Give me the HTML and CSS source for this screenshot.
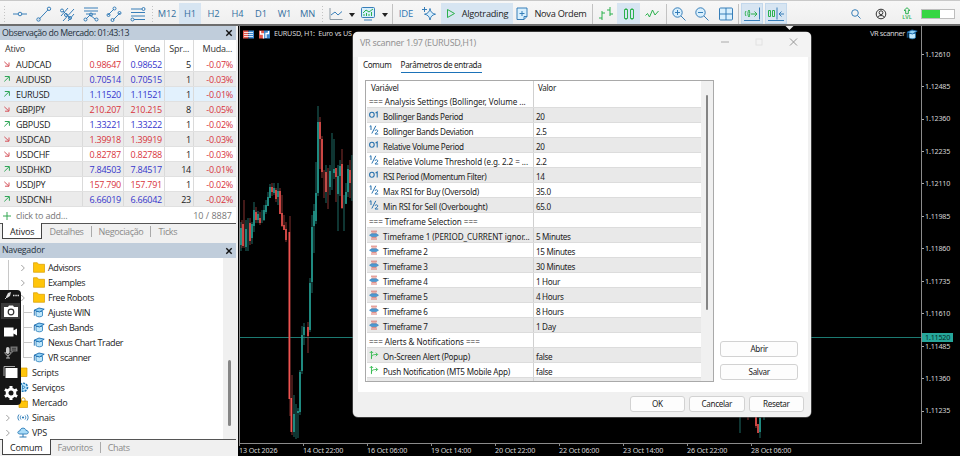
FILE: index.html
```html
<!DOCTYPE html>
<html lang="pt">
<head>
<meta charset="utf-8">
<title>EURUSD,H1</title>
<link rel="stylesheet" href="styles.css">
</head>
<body>
<svg class="defs" aria-hidden="true">
  <defs>
    <symbol id="down" viewBox="0 0 8 8"><path d="M1.300 1.800 5.800 6M6 2.500V6.200H2" fill="none" stroke="#d5525a" stroke-width="1"/></symbol>
    <symbol id="up" viewBox="0 0 8 8"><path d="M1.300 6.400 6 1.800M1.800 1.500h4.600v4.300" fill="none" stroke="#2fa557" stroke-width="1"/></symbol>
    <symbol id="chev" viewBox="0 0 6 8"><path d="M1.300 1 4.300 4 1.300 7" fill="none" stroke="#8c8c8c" stroke-width=".8"/></symbol>
    <symbol id="folder" viewBox="0 0 12 11"><path d="M.5.7h3.800l1.200 1.600h6v8H.5z" fill="#ffc50a" stroke="#d99c00" stroke-width=".7"/></symbol>
    <symbol id="cap" viewBox="0 0 12 11"><path d="M3 4.500v4.200c1.700 1.500 5 1.500 6.500 0V4.500z" fill="#bfe6fb" stroke="#1f78b8" stroke-width=".8"/><path d="M1 3.300 6 1l5.200 1.200L6.500 5z" fill="#8fd0f5" stroke="#1668ab" stroke-width=".9"/><path d="M1.300 3.500v5.200" stroke="#1668ab" stroke-width=".9"/></symbol>
    <symbol id="enum" viewBox="0 0 10 10"><path d="M2 1.200h6M2.500 3h5M2.500 7.300h5M2 9h6" stroke="#d6675f" stroke-width=".9"/><path d="M.5 5.200 2.500 3.800h5l2 1.400-2 1.300h-5z" fill="#4d9ad2" stroke="#2375b3" stroke-width=".5"/></symbol>
    <symbol id="bool" viewBox="0 0 11 10"><path d="M2.700 9.500V1M.8 2.800 2.700.9l1.900 1.900M2.700 8c0-3 2-3.600 6.500-3.600M7.500 2.400l2 2-2 2" fill="none" stroke="#2fb84c" stroke-width="1"/></symbol>
    <symbol id="half" viewBox="0 0 10 10"><path d="M.6 1.700 2 .7v4.300M6.800.8 2.800 8.500M6 5.800c.3-1.400 3-1.300 2.700.4C8.500 7.300 6.300 8 6 9h3.200" fill="none" stroke="#2771ad" stroke-width="1"/></symbol>
    <symbol id="int" viewBox="0 0 10 10"><path d="M6.600 3 8.200 2v5.500" fill="none" stroke="#2771ad" stroke-width="1.100"/><ellipse cx="2.900" cy="4.800" rx="2.300" ry="2.500" fill="none" stroke="#2771ad" stroke-width="1.100"/></symbol>
  </defs>
</svg>
<div class="app">
  <header class="toolbar">
    <i class="grip"></i>
    <svg width="16" height="16"><path d="M1 8h5M10 8h5" class="b"/><circle cx="8" cy="8" r="1.800" class="b"/></svg>
    <svg width="16" height="16"><path d="m3 13.300 9-9.500" class="b"/><circle cx="2.500" cy="13.500" r="1.700" class="b"/><circle cx="13" cy="2.800" r="1.700" class="b"/></svg>
    <svg width="16" height="16"><path d="m2 10 7-8M4 15l11-12M9 15l6-7M4 5l7 7" class="b"/><circle cx="3" cy="4.500" r="1.500" class="b"/><circle cx="7" cy="9" r="1.500" class="b"/><circle cx="11" cy="12" r="1.500" class="b"/></svg>
    <svg width="16" height="16"><path d="M1 2h14M1 5h14M3 8h10M3 13l4-4 5 4" class="b"/><circle cx="2.500" cy="13.500" r="1.500" class="b"/><circle cx="8" cy="8.500" r="1.500" class="b"/><circle cx="13.500" cy="13.500" r="1.500" class="b"/></svg>
    <svg width="16" height="16"><path d="m2 9 6-6M7 14l7-7" class="b"/><circle cx="2.500" cy="9" r="1.500" class="b"/><circle cx="8.500" cy="2.500" r="1.500" class="b"/><circle cx="6.500" cy="14" r="1.500" class="b"/><circle cx="13.500" cy="7" r="1.500" class="b"/></svg>
    <svg width="16" height="16"><path d="M1 3h11M1 6.500h14M1 10h14M4 13.500h11" class="b"/><circle cx="13.500" cy="3" r="1.500" class="b"/><circle cx="2.500" cy="13.500" r="1.500" class="b"/></svg>
    <i class="grip"></i>
    <span class="tf">M12</span><span class="tf on">H1</span><span class="tf">H2</span><span class="tf">H4</span><span class="tf">D1</span><span class="tf">W1</span><span class="tf">MN</span>
    <i class="grip"></i>
    <svg width="16" height="16"><path d="M2 2v11.500h12.500" class="g"/><path d="m3 9 4-3 3 3 4-3.500" class="b"/></svg>
    <i class="caret"></i>
    <svg width="16" height="16"><rect x="1.500" y="1.500" width="13" height="10" rx="1" class="b lb"/><path d="m3 7 3-3 3 2 4-3" class="n"/><path d="M4 10V8M6.500 10V7M9 10V8M11.500 10V6" class="n"/><path d="M4 14h8" class="b"/></svg>
    <i class="caret"></i>
    <i class="sep"></i>
    <span class="ide">IDE</span>
    <svg width="16" height="16"><path d="M9 2.500c.6 3.500 2 5 5.500 5.700C11 9 9.600 10.500 9 14c-.6-3.500-2-5-5.500-5.800C7 7.500 8.400 6 9 2.500z" class="b lb"/><path d="M3.500 1v5M1 3.500h5" class="b"/></svg>
    <span class="tool on"><svg width="10" height="12"><path d="M1.500 1.500v8l7-4z" class="n"/></svg>Algotrading</span>
    <span class="tool new"><svg width="12" height="14"><path d="M1 1h10v8.500l-3 3H1zM8 12.500v-3h3" class="b lb"/><path d="M6 4v5M3.500 6.500h5" class="b"/></svg>Nova Ordem</span>
    <i class="sep"></i>
    <svg width="16" height="16"><path d="M4 5v9M1 12h3M4 7h3M12 1v9M9 4h3M12 8h3" class="n"/></svg>
    <span class="on"><svg width="16" height="16"><path d="M3.500 3.500h3v9h-3zM9.500 3.500h3v9h-3zM5 2v1M5 13v1M11 2v1M11 13v1" class="n"/></svg></span>
    <svg width="16" height="16"><path d="m1.500 9.500 2-2 2 3.500 3-7 2.500 5 3.500-4" class="n"/></svg>
    <i class="sep"></i>
    <svg width="16" height="16"><circle cx="6.500" cy="6.500" r="4.700" class="b lb"/><path d="m10 10 4.500 4.500M4 6.500h5M6.500 4v5" class="b"/></svg>
    <svg width="16" height="16"><circle cx="6.500" cy="6.500" r="4.700" class="b lb"/><path d="m10 10 4.500 4.500M4 6.500h5" class="b"/></svg>
    <svg width="16" height="16"><rect x="1.500" y="2" width="13" height="12" rx="1" class="b lb"/><path d="M8 2v12M1.500 8h13" class="b"/></svg>
    <i class="sep"></i>
    <span class="on box"><svg width="18" height="18"><path d="M3 6c-1 1.500-1 3.500 0 5M6 5c-1.500 2-1.500 5 0 7 1-2 1-5 0-7M8 9h6M11.500 6.500 14 9l-2.500 2.500" class="n"/><path d="M16.500 2.500v12M1 15.500h16" class="b"/></svg></span>
    <span class="on box"><svg width="18" height="18"><path d="M1.500 5.500h2v6h-2zM5.500 5.500h2v6h-2z" class="n"/><path d="M10 2.500v12M1 15.500h16M17 9h-4.500M14.500 6.500 12 9l2.500 2.500" class="b"/></svg></span>
    <i></i>
    <svg width="12" height="12"><circle cx="5" cy="5" r="3.300" class="b"/><path d="m7.500 7.500 3 3" class="b"/></svg>
    <svg width="14" height="14"><circle cx="7" cy="7" r="4.800" class="k"/><circle cx="7" cy="5.700" r="1.900" class="k"/><path d="M3.500 10.500c1-2.600 6-2.600 7 0" class="k"/></svg>
    <span class="lvl"><svg width="10" height="8"><path d="M5 .7 8 3.500H6.300v3.200H3.700V3.500H2z" class="n"/></svg>LVL</span>
    <span class="batt"><i></i></span>
  </header>
  <main class="main">
    <aside class="side">
      <section class="panel watch">
        <h2 class="cap">Observação do Mercado: 01:43:13<svg width="8" height="8"><path d="m1.300 1.300 5.400 5.400M6.700 1.300 1.300 6.700" stroke="#111" stroke-width="1.400"/></svg></h2>
        <div class="q head"><span>Ativo</span><span>Bid</span><span>Venda</span><span>Spr...</span><span>Muda...</span></div>
        <div class="q r"><span><svg><use href="#down"/></svg>AUDCAD</span><span>0.98647</span><span class="bl">0.98652</span><span>5</span><span>-0.07%</span></div>
        <div class="q bb alt"><span><svg><use href="#up"/></svg>AUDUSD</span><span>0.70514</span><span>0.70515</span><span>1</span><span>-0.03%</span></div>
        <div class="q bb sel"><span><svg><use href="#up"/></svg>EURUSD</span><span>1.11520</span><span>1.11521</span><span>1</span><span>-0.01%</span></div>
        <div class="q r alt"><span><svg><use href="#down"/></svg>GBPJPY</span><span>210.207</span><span>210.215</span><span>8</span><span>-0.05%</span></div>
        <div class="q bb"><span><svg><use href="#up"/></svg>GBPUSD</span><span>1.33221</span><span>1.33222</span><span>1</span><span>-0.02%</span></div>
        <div class="q r alt"><span><svg><use href="#down"/></svg>USDCAD</span><span>1.39918</span><span>1.39919</span><span>1</span><span>-0.03%</span></div>
        <div class="q r"><span><svg><use href="#down"/></svg>USDCHF</span><span>0.82787</span><span>0.82788</span><span>1</span><span>-0.03%</span></div>
        <div class="q bb alt"><span><svg><use href="#up"/></svg>USDHKD</span><span>7.84503</span><span>7.84517</span><span>14</span><span>-0.01%</span></div>
        <div class="q r"><span><svg><use href="#down"/></svg>USDJPY</span><span>157.790</span><span>157.791</span><span>1</span><span>-0.02%</span></div>
        <div class="q bb alt"><span><svg><use href="#up"/></svg>USDCNH</span><span>6.66019</span><span>6.66042</span><span>23</span><span>-0.02%</span></div>
        <div class="add"><svg width="10" height="10"><path d="M5 1v8M1 5h8" stroke="#35a853"/></svg><span>click to add...</span><span class="count">10 / 8887</span></div>
        <nav class="tabs"><b>Ativos</b><span>Detalhes</span><span>Negociação</span><span>Ticks</span></nav>
      </section>
      <section class="panel nav">
        <h2 class="cap">Navegador<svg width="8" height="8"><path d="m1.300 1.300 5.400 5.400M6.700 1.300 1.300 6.700" stroke="#111" stroke-width="1.400"/></svg></h2>
        <div class="treewrap">
          <ul class="tree">
            <li class="l2"><svg class="chev"><use href="#chev"/></svg><svg class="ic"><use href="#folder"/></svg>Advisors</li>
            <li class="l2"><svg class="chev"><use href="#chev"/></svg><svg class="ic"><use href="#folder"/></svg>Examples</li>
            <li class="l2"><svg class="chev"><use href="#chev"/></svg><svg class="ic"><use href="#folder"/></svg>Free Robots</li>
            <li class="l2 leaf"><svg class="ic"><use href="#cap"/></svg>Ajuste WIN</li>
            <li class="l2 leaf"><svg class="ic"><use href="#cap"/></svg>Cash Bands</li>
            <li class="l2 leaf"><svg class="ic"><use href="#cap"/></svg>Nexus Chart Trader</li>
            <li class="l2 leaf last"><svg class="ic"><use href="#cap"/></svg>VR scanner</li>
            <li class="l1"><svg class="ic" viewBox="0 0 12 11"><path d="M2 1h8v8.500H2z" fill="#ffc50a" stroke="#d99c00" stroke-width=".7"/></svg>Scripts</li>
            <li class="l1"><svg class="ic" viewBox="0 0 12 11"><circle cx="6.500" cy="5.300" r="4" fill="#bfe6fb" stroke="#1f78b8" stroke-width="1.600" stroke-dasharray="2 1"/><path d="M5.500 3.500v3.800l2.700-2z" fill="none" stroke="#1f78b8" stroke-width=".8"/></svg>Serviços</li>
            <li class="l1"><svg class="ic" viewBox="0 0 12 11"><path d="M2 4h8.500v6.500H2z" fill="#ffc50a" stroke="#d99c00" stroke-width=".7"/><path d="M4.500 5V2.500C4.500.3 8 .3 8 2.500V5" fill="none" stroke="#d99c00"/></svg>Mercado</li>
            <li class="l1"><svg class="chev"><use href="#chev"/></svg><svg class="ic" viewBox="0 0 12 11"><path d="M2 2.500c-1.500 2-1.500 4 0 6M4 3.500c-1 1.300-1 2.700 0 4M10 2.500c1.500 2 1.500 4 0 6M8 3.500c1 1.300 1 2.700 0 4" fill="none" stroke="#2a79b5" stroke-width=".9"/><circle cx="6" cy="5.500" r="1.100" fill="#2a79b5"/></svg>Sinais</li>
            <li class="l1"><svg class="chev"><use href="#chev"/></svg><svg class="ic" viewBox="0 0 12 11"><path d="M3 7C-.2 7 .5 3.800 2.800 4 3.500.2 8.500.3 9 3.500c3-.2 3 3.500.5 3.500z" fill="#a9dcf9" stroke="#2a79b5" stroke-width=".9"/><path d="M6 7v3M2.500 10h7" stroke="#2a79b5"/></svg>VPS</li>
          </ul>
          <div class="gutter"><i></i></div>
        </div>
        <nav class="tabs"><b>Comum</b><span>Favoritos</span><span>Chats</span></nav>
      </section>
    </aside>
    <section class="chart">
      <div class="plot">
        <div class="ctitle"><span><svg width="12" height="9"><path d="M0 .5h5.500v8H0z" fill="#e4574c"/><path d="M5.500.5H11v8H5.500z" fill="#3c87cf"/><path d="M1 2.500h9M1 4.500h9M1 6.500h9" stroke="#fff" stroke-width=".8"/></svg><svg class="s2" width="12" height="9"><path d="M0 .5h5v8H0z" fill="#e4574c"/><path d="M5 .5h6v8H5z" fill="#3c87cf"/><path d="M1.500 1v3h3v4.500M7 8V3.500h2.500V1" stroke="#fff" stroke-width="1.300" fill="none"/></svg>EURUSD, H1:&nbsp; Euro vs US</span><span class="ea">VR scanner<svg width="12" height="11"><use href="#cap"/></svg></span></div>
        <svg class="candles" width="681" height="417" viewBox="240 26 681 417">
          <path d="M785.500 26h8l-4 4z" fill="#e8e8e8"/>
          <path d="M239 337.500h682" stroke="#1c7a72"/>
          <g stroke="#26867e" stroke-width=".8"><path d="M241 222v29M246 220v31M248 218v33M252 222v22M254 202v30M258 211v12M262 210v13M264 205v16M266 200v14M268 192v14M270 184v14M274 183v12M278 183v22M294 395v42M296 404v35M298 408v30M300 370v45M302 326v48M304 323v22M310 278v54M312 215v78M314 204v49M316 162v62M318 106v90M326 165v38M330 165v30M332 133v57M334 139v40M338 165v66M340 160v36M344 195v36M346 183v20M348 165v32M352 155v46M354 145v41M740 410v23M760 410v28M764 410v10"/></g>
          <g stroke="#a83f3c" stroke-width=".8"><path d="M242 220v28M244 200v48M250 218v27M256 207v16M260 212v13M272 183v13M276 188v14M280 188v26M282 195v32M284 215v15M286 222v20M290 216v200M292 375v60M308 322v31M320 117v52M322 136v42M324 170v28M328 168v41M336 172v30M342 149v60M350 160v38M748 410v10M756 410v18"/></g>
          <g stroke="#26a69a" stroke-width="1.500"><path d="M241 228v17M246 229v18M252 224v14M254 210v16M258 214v6M264 210v10M266 205v7M268 197v9M270 187v11M274 188v5M278 191v6M294 414v18M298 411v2M300 372v40M302 335v36M304 327v8M310 283v47M312 227v55M314 211v15M316 193v28M318 122v71M330 171v16M334 169v4M338 176v18M340 166v10M346 192v12M348 169v23M354 155v25M760 418v14"/></g>
          <g stroke="#ef5350" stroke-width="1.600"><path d="M243 224v22M250 223v18M256 212v8M260 218v5M272 187v5M276 190v9M280 191v23M282 213v13M284 225v5M286 229v11M289.300 232v167M291.300 398v34M308 327v9M320 122v17M322 139v33M326 172v20M336 168v9M342 164v44M350 170v13M756 415v11M758 424v9"/></g>
        </svg>
      </div>
      <div class="prices"><span>1.12610</span><span>1.12485</span><span>1.12360</span><span>1.12235</span><span>1.12110</span><span>1.11985</span><span>1.11860</span><span>1.11735</span><span>1.11610</span><span>1.11485</span><span>1.11360</span><span>1.11235</span><b>1.11520</b></div>
      <div class="dates"><span>13 Oct 2026</span><span>14 Oct 22:00</span><span>16 Oct 06:00</span><span>19 Oct 14:00</span><span>20 Oct 22:00</span><span>22 Oct 06:00</span><span>23 Oct 14:00</span><span>26 Oct 22:00</span><span>28 Oct 06:00</span></div>
    </section>
  </main>

  <div class="dialog">
    <div class="dtitle"><span>VR scanner 1.97 (EURUSD,H1)</span><svg width="80" height="10"><path d="M1 5h8" stroke="#aaa"/><rect x="36" y="2" width="6" height="6" fill="none" stroke="#e2e2e2"/><path d="m70 1.500 7 7M77 1.500l-7 7" stroke="#8c8c8c" stroke-width=".9"/></svg></div>
    <div class="dbody">
      <nav class="dtabs"><span>Comum</span><b>Parâmetros de entrada</b></nav>
      <div class="dcols">
        <div class="grid">
          <div class="rows">
            <div class="p ph"><span>Variável</span><span>Valor</span></div>
            <div class="p s"><span>=== Analysis Settings (Bollinger, Volume ...</span><span></span></div>
            <div class="p"><span><svg><use href="#int"/></svg>Bollinger Bands Period</span><span>20</span></div>
            <div class="p"><span><svg><use href="#half"/></svg>Bollinger Bands Deviation</span><span>2.5</span></div>
            <div class="p"><span><svg><use href="#int"/></svg>Relative Volume Period</span><span>20</span></div>
            <div class="p w"><span><svg><use href="#half"/></svg>Relative Volume Threshold (e.g. 2.2 = ...</span><span>2.2</span></div>
            <div class="p"><span><svg><use href="#int"/></svg>RSI Period (Momentum Filter)</span><span>14</span></div>
            <div class="p m"><span><svg><use href="#half"/></svg>Max RSI for Buy (Oversold)</span><span>35.0</span></div>
            <div class="p m"><span><svg><use href="#half"/></svg>Min RSI for Sell (Overbought)</span><span>65.0</span></div>
            <div class="p s"><span>=== Timeframe Selection ===</span><span></span></div>
            <div class="p w"><span><svg><use href="#enum"/></svg>Timeframe 1 (PERIOD_CURRENT ignor...</span><span>5 Minutes</span></div>
            <div class="p"><span><svg><use href="#enum"/></svg>Timeframe 2</span><span>15 Minutes</span></div>
            <div class="p"><span><svg><use href="#enum"/></svg>Timeframe 3</span><span>30 Minutes</span></div>
            <div class="p"><span><svg><use href="#enum"/></svg>Timeframe 4</span><span>1 Hour</span></div>
            <div class="p"><span><svg><use href="#enum"/></svg>Timeframe 5</span><span>4 Hours</span></div>
            <div class="p"><span><svg><use href="#enum"/></svg>Timeframe 6</span><span>8 Hours</span></div>
            <div class="p"><span><svg><use href="#enum"/></svg>Timeframe 7</span><span>1 Day</span></div>
            <div class="p s"><span>=== Alerts &amp; Notifications ===</span><span></span></div>
            <div class="p m"><span><svg><use href="#bool"/></svg>On-Screen Alert (Popup)</span><span>false</span></div>
            <div class="p m"><span><svg><use href="#bool"/></svg>Push Notification (MT5 Mobile App)</span><span>false</span></div>
            <div class="p"><span></span><span></span></div>
          </div>
          <div class="dgutter"><i></i></div>
        </div>
        <div class="actions"><button>Abrir</button><button>Salvar</button></div>
      </div>
    </div>
    <div class="dfoot"><button>OK</button><button>Cancelar</button><button>Resetar</button></div>
  </div>

  <div class="rec">
    <svg width="16" height="10"><path d="m3 6 2-4 3-1-1 4-3 2z" fill="#ddd"/><path d="m2 8 3-3" stroke="#ddd"/><path d="M10 4.500h1.500M12.300 4.500h1.500M14.500 4.500H16" stroke="#ddd" stroke-width="1.300"/></svg>
    <div class="cam"><svg width="16" height="14"><path d="M1 3h4l1-1.500h4L11 3h4v10H1z" fill="#fff"/><circle cx="8" cy="8" r="2.800" fill="none" stroke="#333" stroke-width="1.200"/></svg></div>
    <svg width="16" height="14"><path d="M1 2.500h9.500v3l3.500-2v7l-3.500-2v3H1z" fill="#fff"/></svg>
    <svg width="16" height="14"><rect x="3" y="2" width="3.500" height="7" rx="1.700" fill="#ccc"/><path d="M2 7c0 4.500 6 4.500 6 0M5 10.500V13M3 13h4" stroke="#bbb" fill="none"/><path d="M7.500 1.500h7v5h-4l-2 2v-2h-1z" fill="#777"/><path d="M9 3.300h4M9 5h4" stroke="#222" stroke-width=".7"/></svg>
    <svg width="16" height="14"><path d="M1 11V1.500h11" stroke="#aaa" fill="none"/><path d="M2.500 3h12v10h-12z" fill="#fff"/></svg>
    <svg width="16" height="16"><circle cx="8" cy="8" r="3.900" fill="none" stroke="#fff" stroke-width="2.800"/><path d="M8 1v2.500M8 12.500V15M1.900 4.500l2.200 1.200M11.900 10.300l2.200 1.200M1.900 11.500l2.200-1.200M11.900 5.700l2.200-1.200" stroke="#fff" stroke-width="3"/></svg>
  </div>
</div>
</body>
</html>
```
FILE: styles.css
```css
* { box-sizing: border-box; }
body { margin: 0; overflow: hidden; font: 9px/1 "Open Sans", "Noto Sans", sans-serif; color: #222; letter-spacing: -.2px; }
i { font-style: normal; }
svg { display: block; flex: none; }
.defs { position: absolute; width: 0; height: 0; }
.app { position: relative; width: 960px; height: 456px; display: flex; flex-direction: column; background: #f0f0f0; overflow: hidden; }

.b { fill: none; stroke: #2e78b5; stroke-width: .95; }
.lb { fill: #d8effd; }
.n { fill: none; stroke: #2bb14c; stroke-width: 1; }
.g { fill: none; stroke: #8a98a3; stroke-width: 1; }
.k { fill: none; stroke: #333; stroke-width: 1; }

.toolbar {
  flex: none; height: 26px; display: grid; align-items: center; justify-items: center;
  grid-template-columns: 8px 24px 23px 24px 23px 24px 23px 6px 24px 22px 25px 23px 24px 23px 23px 6px 22px 9px 24px 9px 7px 20px 25px 72px 77px 5px 22px 23px 24px 4px 22px 24px 23px 3px 24px 24px 1fr 24px 26px 26px 35px 5px;
  grid-template-rows: 21px; padding: 2px 0 0; border-top: 1px solid #c9c9c9; border-bottom: 2px solid #6d6d6d;
  background: linear-gradient(#f7f7f7, #efefef);
}
.grip { width: 3px; height: 18px; background: radial-gradient(circle, #c4c4c4 .6px, transparent .9px) 0 0 / 3px 3px; }
.sep { width: 1px; height: 20px; background: #c2c2c2; }
.caret { border: 3px solid transparent; border-top: 4px solid #222; border-bottom: 0; margin-top: 3px; }
.toolbar .on { background: #d7e5f2; height: 21px; width: 100%; display: flex; align-items: center; justify-content: center; }
.toolbar .box { width: 22px; border: 1px solid #c3d8ec; }
.tf { color: #336f9f; font-size: 9.300px; letter-spacing: -.1px; }
.ide { color: #2e78b5; font-size: 9.500px; letter-spacing: -.1px; }
.tool { display: flex; align-items: center; gap: 6px; font-size: 9.200px; letter-spacing: -.250px; white-space: nowrap; padding-top: 1px; }
.lvl { display: flex; flex-direction: column; align-items: center; font-size: 5.500px; letter-spacing: 0; color: #2bb14c; font-weight: 600; }
.batt { width: 34px; height: 10px; border: 1px solid #bdbdbd; background: #fff; display: flex; }
.batt i { width: 18px; background: #36d643; }

.main { flex: 1; display: flex; min-height: 0; }
.side { width: 236px; flex: none; display: flex; flex-direction: column; background: #f0f0f0; }
.cap { margin: 0; height: 14px; display: flex; align-items: center; justify-content: space-between; padding: 0 3px 0 2px; background: #c0cddb; font-size: 8.800px; font-weight: 400; letter-spacing: -.4px; color: #27323d; }
.watch { height: 217px; background: #fff; display: flex; flex-direction: column; }
.q { height: 15px; display: grid; grid-template-columns: 83px 41px 41px 29px 42px; line-height: 15px; border-bottom: 1px solid #e0e0e0; letter-spacing: -.25px; }
.q span { height: 14px; border-right: 1px solid #dadada; padding-right: 2px; text-align: right; white-space: nowrap; }
.q span:first-child { text-align: left; display: flex; align-items: center; }
.q span:last-child { color: #d8343c; border-right: 0; padding-right: 3px; }
.q span:first-child svg { width: 8px; height: 8px; margin: 0 5px 0 3px; }
.q.head { height: 17px; line-height: 17px; border: 0; }
.q.head span { height: 17px; }
.q.head span, .q.head span:last-child { color: #333; padding-right: 4px; }
.q.head span:first-child { padding-left: 5px; }
.q.alt { background: #ebebeb; }
.q.sel { background: #e2f1fd; }
.r span:nth-child(2), .r span:nth-child(3) { color: #d8343c; }
.bb span:nth-child(2), .bb span:nth-child(3), .r span.bl:nth-child(3) { color: #3535cc; }
.add { flex: 1; display: flex; align-items: center; padding: 1px 4px 0 2px; color: #777; }
.add svg { margin-right: 4px; }
.count { margin-left: auto; letter-spacing: 0; }
.tabs { height: 20px; flex: none; display: flex; align-items: flex-start; background: #f0f0f0; border-top: 1px solid #555; padding-left: 2px; color: #8a8a8a; letter-spacing: -.36px; }
.tabs b { font-weight: 400; color: #222; background: #fff; border: 1px solid #444; border-top: 0; margin-top: -1px; height: 16px; line-height: 17px; padding: 0 7px; letter-spacing: -.15px; }
.tabs span { line-height: 11px; padding: 0 7px; margin-top: 2px; border-right: 1px solid #aaa; }
.tabs span:last-child { border: 0; }
.nav { flex: 1; display: flex; flex-direction: column; min-height: 0; }
.nav .cap { height: 15px; letter-spacing: -.25px; }
.nav .tabs { height: 17px; }
.treewrap { flex: 1; display: flex; min-height: 0; background: #fff; }
.tree { flex: 1; margin: 0; padding: 2px 0 0; list-style: none; }
.tree li { height: 15px; display: flex; align-items: center; letter-spacing: -.38px; }
.l2 { padding-left: 20px; background: linear-gradient(#c8c8c8, #c8c8c8) 8px 0 / 1px 100% no-repeat; }
.l2.leaf { padding-left: 33px; background: linear-gradient(#c8c8c8, #c8c8c8) 23px 0 / 1px 100% no-repeat, linear-gradient(#c8c8c8, #c8c8c8) 24px 7px / 8px 1px no-repeat; }
.l2.last { background-size: 1px 8px, 8px 1px; }
.tree .l1 { padding-left: 17px; letter-spacing: -.25px; }
.tree .l1:has(.chev) { padding-left: 5px; }
.chev { width: 6px; height: 8px; margin-right: 7px; }
.l1 .chev { margin-right: 6px; }
.ic { width: 12px; height: 11px; margin-right: 3px; }
.gutter { width: 13px; background: #f0f0f0; padding: 102px 5px 0 5px; }
.gutter i { display: block; height: 66px; width: 3px; border-radius: 2px; background: #868686; }

.chart { flex: 1; margin-left: 2px; background: #000; color: #d6d6d6; display: grid; grid-template-columns: 683px 1fr; grid-template-rows: 418px 12px; font: 7.200px/1 "Noto Sans", sans-serif; letter-spacing: -.15px; border-left: 1px solid #000; }
.plot { position: relative; border: solid #8b8b8b; border-width: 0 1px 1px; overflow: hidden; }
.candles { display: block; }
.ctitle { position: absolute; inset: 0 3px auto 3px; height: 16px; display: flex; justify-content: space-between; align-items: center; }
.ctitle span { display: flex; align-items: center; letter-spacing: -.2px; }
.s2 { margin: 0 3px 0 4px; }
.ctitle .ea { gap: 1px; font-size: 7.500px; letter-spacing: -.4px; }
.prices { position: relative; padding-top: 12px; letter-spacing: -.2px; }
.prices span { display: flex; align-items: center; height: 32.450px; }
.prices span::before { content: ""; width: 2px; height: 1px; background: #aaa; margin-right: 1px; }
.prices b { position: absolute; left: 0; top: 307px; width: 31px; height: 9px; line-height: 9px; padding-left: 3px; background: #26a69a; color: #032b28; font-weight: 400; }
.dates { grid-column: 1 / 3; display: flex; }
.dates span { width: 64px; flex: none; line-height: 13px; white-space: nowrap; background: linear-gradient(#8b8b8b, #8b8b8b) 0 0 / 1px 2px no-repeat; }

.dialog { position: absolute; left: 353px; top: 32px; width: 458px; height: 385px; border-radius: 5px; background: #f0f0f0; box-shadow: 0 0 0 .5px #777; display: flex; flex-direction: column; font: 8.100px/1 "Noto Sans", sans-serif; letter-spacing: -.32px; color: #1c1c1c; overflow: hidden; }
.dtitle { height: 25px; padding: 0 11px 5px 7px; display: flex; align-items: center; justify-content: space-between; background: #f3f3f3; color: #949494; font-size: 9px; letter-spacing: -.3px; }
.dbody { height: 335px; margin: 0 3px 0 5px; background: #fff; padding: 0 10px 0 7px; }
.dtabs { height: 23px; display: flex; gap: 9px; padding-top: 3px; margin-left: -2px; }
.dtabs span, .dtabs b { height: 13px; line-height: 9px; font-weight: 400; }
.dtabs b { border-bottom: 1px solid #1b72b8; }
.dcols { display: flex; gap: 6px; }
.grid { width: 350px; height: 302px; border: 1px solid #a9a9a9; display: flex; padding-left: 1px; }
.rows { width: 334px; height: 300px; overflow: hidden; }
.p { display: grid; grid-template-columns: 167px 1fr; height: 15px; line-height: 15px; border-bottom: 1px solid #dcdcdc; }
.p span { height: 14px; white-space: nowrap; display: flex; align-items: center; padding-top: 2px; }
.p span:first-child { padding-left: 2px; border-right: 1px solid #d0d0d0; }
.p span:last-child { padding-left: 2px; }
.p.s span { letter-spacing: -.05px; }
.p.w span:first-child { letter-spacing: -.08px; }
.p.m span:first-child { letter-spacing: -.2px; }
.p svg { width: 10px; height: 10px; margin: -2px 4px 0 0; }
.p:nth-child(odd) { background: #e9e9e9; }
.p.ph { height: 12px; border: 0; background: #fff; line-height: 13px; }
.p.ph span { height: 12px; padding-top: 0; }
.p.ph span:first-child { padding-left: 4px; }
.p.ph span:last-child { padding-left: 4px; }
.dgutter { flex: 1; background: #f0f0f0; padding: 14px 0 0 5px; }
.dgutter i { display: block; width: 2px; height: 215px; background: #858585; border-radius: 1px; }
.actions { display: flex; flex-direction: column; gap: 7px; justify-content: flex-end; width: 78px; height: 300px; }
button { font: inherit; letter-spacing: inherit; color: inherit; height: 16px; padding: 0; border: 1px solid #d2d2d2; border-radius: 3px; background: #fdfdfd; }
.dfoot { flex: 1; display: flex; justify-content: flex-end; gap: 4px; padding: 4px 7px 0 0; }
.dfoot button { width: 55.500px; }

.rec { position: absolute; left: 0; top: 290px; width: 21px; height: 115px; border-radius: 0 4px 4px 0; background: #161616; display: flex; flex-direction: column; align-items: center; padding-top: 1px; gap: 6px; }
.rec > svg:first-child { margin-bottom: -4px; }
.cam { width: 19px; height: 16px; background: #3a3a3a; display: flex; align-items: center; justify-content: center; }
```
